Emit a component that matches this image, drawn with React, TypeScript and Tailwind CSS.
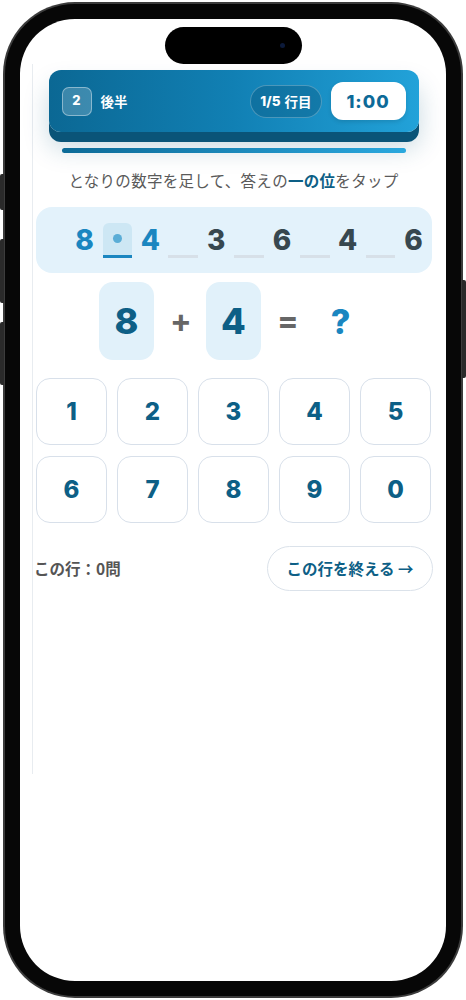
import React from 'react';

const FONT = "font-['Liberation_Sans','Noto_Sans_CJK_JP',sans-serif]";
const NUM = "font-['Inter','Liberation_Sans',sans-serif]";
const JP = "font-['Noto_Sans_CJK_JP','Noto_Sans',sans-serif]";

const DIGITS = [8, 4, 3, 6, 4, 6];
const KEYS = ['1', '2', '3', '4', '5', '6', '7', '8', '9', '0'];

const Slot: React.FC<{ active?: boolean }> = ({ active }) =>
  active ? (
    <div className="w-[30px] h-[35px] rounded-t-[6px] bg-[#cde7f4] border-b-[3px] border-[#1a86c0] flex items-center justify-center">
      <div className="w-[9px] h-[9px] rounded-full bg-[#5aadd6]" />
    </div>
  ) : (
    <div className="w-[30px] h-[35px] border-b-[3px] border-[#d7e0e8]" />
  );

const Header: React.FC = () => (
  <div className="w-[370px] h-[62px] mt-[6px] rounded-[12px] bg-gradient-to-r from-[#0b6894] via-[#1180b4] to-[#22a2d9] shadow-[0_10px_0_#0a5478,0_16px_26px_rgba(10,80,120,0.22)] flex items-center px-[13px]">
    <div className={`w-[30px] h-[29px] rounded-[7px] bg-white/20 border border-white/40 flex items-center justify-center text-white text-[13px] font-extrabold ${NUM}`}>
      2
    </div>
    <span className={`ml-[9px] text-white text-[13.5px] font-bold ${JP}`}>後半</span>
    <div className="flex-1" />
    <div className="h-[33px] px-[9px] rounded-full bg-[#0a4f75]/35 border border-white/25 flex items-center text-white text-[13.5px] font-bold">
      <span className={`${NUM} font-extrabold`}>1/5</span>
      <span className={`ml-[4px] ${JP}`}>行目</span>
    </div>
    <div className={`ml-[9px] w-[75px] h-[38px] rounded-[12px] bg-white flex items-center justify-center text-[#0d6a98] text-[18px] font-extrabold tracking-[1px] shadow-[0_2px_4px_rgba(0,0,0,0.12)] ${NUM}`}>
      1:00
    </div>
  </div>
);

export default function App() {
  return (
    <div className={`w-[466px] h-[1000px] bg-white pl-[3px] pt-[2px] ${FONT}`}>
      <div className="relative w-[460px] h-[996px] rounded-[72px] bg-[#3c3c3c] p-[2px]">
        {/* side buttons */}
        <div className="absolute left-[-3px] top-[172px] w-[4px] h-[36px] rounded-l-[2px] bg-[#2a2a2a]" />
        <div className="absolute left-[-3px] top-[237px] w-[4px] h-[64px] rounded-l-[2px] bg-[#2a2a2a]" />
        <div className="absolute left-[-3px] top-[320px] w-[4px] h-[63px] rounded-l-[2px] bg-[#2a2a2a]" />
        <div className="absolute right-[-3px] top-[278px] w-[4px] h-[98px] rounded-r-[2px] bg-[#2a2a2a]" />

        <div className="w-full h-full rounded-[70px] bg-[#070707] p-[15px]">
          <div className="w-full h-full rounded-[55px] bg-white overflow-hidden flex flex-col items-center">
            <div className="mt-[8px] w-[137px] h-[37px] rounded-full bg-black flex items-center justify-end pr-[17px]">
              <div className="w-[5px] h-[5px] rounded-full bg-[#0c1a3a]" />
            </div>

            <div className="self-start ml-[12px] w-[402px] h-[710px] border-l border-[#e8ecf0] flex flex-col items-center">
              <Header />

              <div className="mt-[16px] w-[344px] h-[5px] rounded-full bg-gradient-to-r from-[#0b6a97] to-[#2aa8de]" />

              <p className={`mt-[16px] text-[15.5px] tracking-[0.3px] leading-[22px] text-[#5a5a5a] ${JP}`}>
                となりの数字を足して、答えの<span className="font-bold text-[#0d5f86]">一の位</span>をタップ
              </p>

              <div className={`mt-[16px] w-[396px] h-[66px] rounded-[16px] bg-[#e3f2fb] flex items-center pl-[31px] overflow-hidden ${NUM}`}>
                {DIGITS.map((d, i) => (
                  <React.Fragment key={i}>
                    <div
                      className={`w-[36px] shrink-0 text-center text-[28px] font-extrabold leading-none ${
                        i < 2 ? 'text-[#1a86c0]' : 'text-[#37474f]'
                      }`}
                    >
                      {d}
                    </div>
                    {i < DIGITS.length - 1 && <Slot active={i === 0} />}
                  </React.Fragment>
                ))}
              </div>

              <div className={`mt-[9px] flex items-center gap-[16px] ${NUM}`}>
                <div className="w-[55px] h-[78px] rounded-[14px] bg-[#e1f1fa] flex items-center justify-center text-[36px] font-extrabold text-[#0d5f86]">
                  8
                </div>
                <div className="w-[20px] text-center text-[32px] font-bold text-[#666]">+</div>
                <div className="w-[55px] h-[78px] rounded-[14px] bg-[#e1f1fa] flex items-center justify-center text-[36px] font-extrabold text-[#0d5f86]">
                  4
                </div>
                <div className="w-[20px] text-center text-[32px] font-bold text-[#666]">=</div>
                <div className="w-[55px] h-[78px] flex items-center justify-center text-[34px] font-extrabold text-[#1a86c0]">
                  ?
                </div>
              </div>

              <div className={`mt-[18px] w-[395px] grid grid-cols-5 gap-x-[10px] gap-y-[11px] ${NUM}`}>
                {KEYS.map((k) => (
                  <button
                    key={k}
                    className="h-[67px] rounded-[14px] border border-[#d8e0ea] bg-white flex items-center justify-center text-[24px] font-extrabold text-[#0d5f86]"
                  >
                    {k}
                  </button>
                ))}
              </div>

              <div className="mt-[23px] w-[399px] flex items-center justify-between">
                <span className={`text-[15.5px] font-bold text-[#555] ${JP}`}>この行：0問</span>
                <button
                  className={`h-[45px] w-[166px] rounded-full border border-[#dbe2ea] bg-white flex items-center justify-center text-[15.5px] font-bold text-[#0d5f86] ${JP}`}
                >
                  この行を終える →
                </button>
              </div>
            </div>
          </div>
        </div>
      </div>
    </div>
  );
}
